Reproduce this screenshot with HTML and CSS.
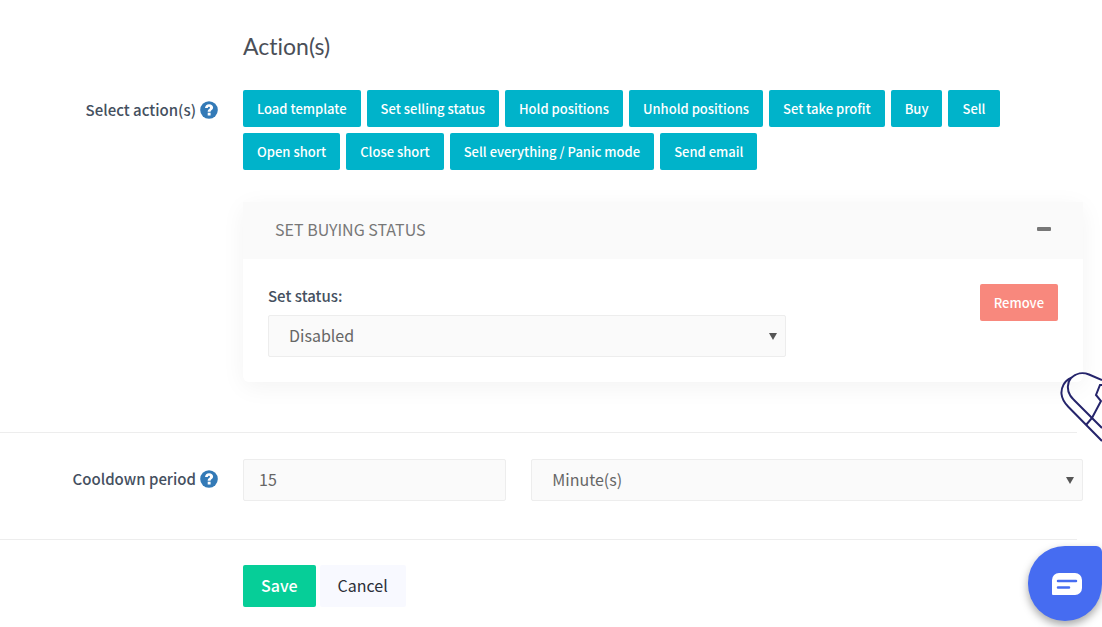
FILE: index.html
```
<!DOCTYPE html>
<html lang="en">
<head>
    <meta charset="UTF-8">
    <meta name="viewport" content="width=device-width, initial-scale=1">
    <title>Action(s)</title>
    <link rel="stylesheet" href="styles.css">
</head>
<body>
<svg class="icon-defs" aria-hidden="true">
    <symbol id="icon-question" viewBox="0 0 18 18">
        <circle cx="9" cy="9" r="8.8" fill="#337ab7"/>
        <path d="M5 7C5.200 4.500 6.700 3.200 9.100 3.200c2.400 0 4 1.300 4 3.300 0 2.500-2.500 2.600-2.500 4.300H7.700c0-2.800 2.300-2.700 2.300-4.100 0-.6-.4-.9-1-.9-.7 0-1.100.4-1.200 1.200z" fill="#fff"/>
        <path d="M7.700 11.700h2.900v2.800H7.700z" fill="#fff"/>
    </symbol>
</svg>

<form class="rule-form">
    <div class="form-row row-actions">
        <h2 class="form-title">Action(s)</h2>
        <div class="form-label">
            <span id="actions-label">Select action(s)</span>
            <svg class="icon-help" aria-hidden="true"><use xlink:href="#icon-question"></use></svg>
        </div>
        <div class="form-content">
            <div class="actions" role="group" aria-labelledby="actions-label">
                <button type="button" class="btn btn-info">Load template</button>
                <button type="button" class="btn btn-info">Set selling status</button>
                <button type="button" class="btn btn-info">Hold positions</button>
                <button type="button" class="btn btn-info">Unhold positions</button>
                <button type="button" class="btn btn-info">Set take profit</button>
                <button type="button" class="btn btn-info">Buy</button>
                <button type="button" class="btn btn-info">Sell</button>
                <button type="button" class="btn btn-info">Open short</button>
                <button type="button" class="btn btn-info">Close short</button>
                <button type="button" class="btn btn-info">Sell everything / Panic mode</button>
                <button type="button" class="btn btn-info">Send email</button>
            </div>
            <div class="panel">
                <div class="panel-heading">
                    <span>SET BUYING STATUS</span>
                    <button type="button" class="panel-toggle" aria-label="Collapse"></button>
                </div>
                <div class="panel-body columns">
                    <div class="wide">
                        <label class="field-label" for="status">Set status:</label>
                        <div class="select">
                            <select class="form-control" id="status">
                                <option>Disabled</option>
                                <option>Enabled</option>
                            </select>
                        </div>
                    </div>
                    <button type="button" class="btn btn-danger">Remove</button>
                </div>
            </div>
        </div>
    </div>

    <div class="form-row row-cooldown">
        <div class="form-label">
            <label for="cooldown">Cooldown period</label>
            <svg class="icon-help" aria-hidden="true"><use xlink:href="#icon-question"></use></svg>
        </div>
        <div class="form-content columns">
            <input class="form-control" type="text" id="cooldown" value="15">
            <div class="select wide">
                <select class="form-control" aria-label="Cooldown unit">
                    <option>Minute(s)</option>
                    <option>Hour(s)</option>
                </select>
            </div>
        </div>
    </div>

    <div class="form-row row-submit">
        <div class="form-content">
            <button type="submit" class="btn btn-lg btn-save">Save</button>
            <button type="button" class="btn btn-lg btn-cancel">Cancel</button>
        </div>
    </div>
</form>

<svg class="decoration" viewBox="0 0 42 72" fill="none" stroke="#25246b" stroke-width="2" aria-hidden="true">
    <path d="M42 9 29 3.500C23 1 16 2 11 7 7 12 7 19 10 24c1 2 3 4 5 6l27 27"/>
    <path d="M11 7C4 10 1 17 1.500 23c.5 5 3 9 7 13L42 70"/>
    <path d="M42 14h-2l-4 10 5 6-9 17-6 7"/>
</svg>

<button type="button" class="chat" aria-label="Open chat">
    <svg viewBox="0 0 30 22" aria-hidden="true">
        <path d="M7 0h16a7 7 0 0 1 7 7v8a7 7 0 0 1-7 7H1a1 1 0 0 1-1-1V7a7 7 0 0 1 7-7z" fill="#fff"/>
        <path d="M6 8h18M6 14.500h11" stroke="#466cf1" stroke-width="2.500" stroke-linecap="round"/>
    </svg>
</button>
</body>
</html>
```
FILE: styles.css
```
*{
    box-sizing: border-box;
}
body{
    margin: 0;
    background: #fff;
    color: #455060;
    font-family: "Noto Sans CJK SC", "Open Sans", sans-serif;
    font-size: 16px;
    line-height: 24px;
}
button,
input,
select{
    font: inherit;
}
.icon-defs{
    display: none;
}

/* form rows */
.form-row{
    display: grid;
    grid-template-columns: 218px minmax(0, 1fr);
    column-gap: 25px;
    position: relative;
    padding-right: 19px;
}
.form-row + .form-row::before{
    content: "";
    position: absolute;
    top: 0;
    left: 0;
    right: 25px;
    border-top: 1px solid #ededed;
}
.row-actions{
    padding-top: 31px;
    padding-bottom: 50px;
}
.row-cooldown{
    padding-top: 27px;
    padding-bottom: 38px;
}
.row-submit{
    padding-top: 26px;
    padding-bottom: 20px;
}
.form-title,
.form-content{
    grid-column: 2;
}
.form-title{
    margin: 0 0 29px;
    color: #4b4f58;
    font-family: Lato, sans-serif;
    font-size: 23px;
    font-weight: 400;
    font-variant-ligatures: none;
    line-height: 30px;
}
.form-label{
    display: flex;
    justify-content: flex-end;
    align-items: center;
    gap: 4px;
    height: 39px;
    font-size: 15px;
    font-weight: 500;
}
.icon-help{
    width: 18px;
    height: 18px;
}
.columns{
    display: grid;
    grid-template-columns: repeat(3, minmax(0, 1fr));
    column-gap: 25px;
}
.wide{
    grid-column: span 2;
}

/* buttons */
.btn{
    padding: 8px 14px;
    border: 0;
    border-radius: 2px;
    color: #fff;
    font-size: 13px;
    font-weight: 500;
    line-height: 21px;
    cursor: pointer;
}
.actions{
    display: flex;
    flex-wrap: wrap;
    gap: 6px;
}
.btn-info{
    background: #00b3ca;
}
.btn-danger{
    justify-self: end;
    align-self: start;
    background: #f8887d;
}
.btn-lg{
    padding: 8px 18px 10px;
    font-size: 16px;
    line-height: 24px;
}
.btn-save{
    background: #06ce98;
}
.btn-cancel{
    background: #f8f9ff;
    color: #2b2f38;
    font-weight: 400;
}
.row-submit .form-content{
    display: flex;
    gap: 4px;
}

/* action panel */
.panel{
    margin-top: 32px;
    border-radius: 6px;
    background: #fff;
    box-shadow: 0 5px 25px rgba(0, 0, 0, 0.05);
}
.panel-heading{
    display: flex;
    justify-content: space-between;
    align-items: center;
    height: 57px;
    padding: 0 32px 4px;
    background: #fafafa;
    color: #777;
}
.panel-toggle{
    width: 14px;
    height: 4px;
    padding: 0;
    border: 0;
    border-radius: 1px;
    background: #777;
    cursor: pointer;
}
.panel-body{
    padding: 25px;
}
.field-label{
    display: block;
    margin-bottom: 7px;
    font-size: 15px;
    font-weight: 500;
}

/* inputs */
.form-control{
    display: block;
    width: 100%;
    height: 42px;
    padding: 0 15px 2px;
    border: 1px solid #ededed;
    border-radius: 2px;
    background: #fafafa;
    color: #666;
}
.select{
    position: relative;
}
.select .form-control{
    padding: 0 20px 2px;
    -webkit-appearance: none;
    appearance: none;
}
.select::after{
    content: "";
    position: absolute;
    top: 18px;
    right: 9px;
    border: 4px solid transparent;
    border-top: 7px solid #555;
    border-bottom: 0;
    pointer-events: none;
}

/* floating items */
.decoration{
    position: absolute;
    top: 371px;
    right: 0;
    width: 42px;
    height: 72px;
}
.chat{
    position: fixed;
    right: 0;
    bottom: 6px;
    display: flex;
    justify-content: center;
    align-items: center;
    width: 74px;
    height: 75px;
    padding: 0 0 0 4px;
    border: 0;
    border-radius: 38px 6px 38px 38px;
    background: #466cf1;
    box-shadow: 0 4px 8px rgba(0, 0, 0, 0.35);
    cursor: pointer;
}
.chat svg{
    width: 30px;
    height: 22px;
}
```
